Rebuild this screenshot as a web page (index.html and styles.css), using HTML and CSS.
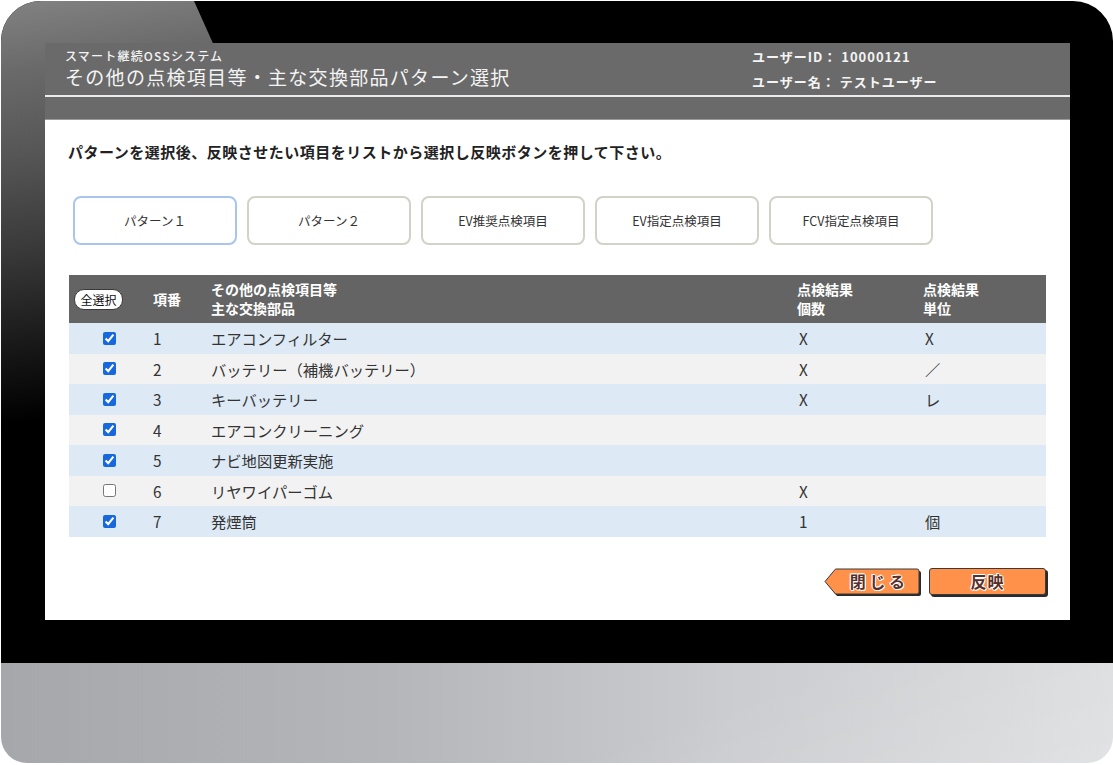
FILE: index.html
```html
<!DOCTYPE html>
<html lang="ja">
<head>
<meta charset="utf-8">
<title>その他の点検項目等・主な交換部品パターン選択</title>
<link rel="stylesheet" href="styles.css">
</head>
<body>
<div class="monitor">
  <div class="bezel">
    <div class="glare"></div>
    <div class="screen">
      <header class="app-header">
        <div class="titles">
          <div class="sys-name">スマート継続OSSシステム</div>
          <h1 class="page-title">その他の点検項目等・主な交換部品パターン選択</h1>
        </div>
        <div class="user-info">
          <div>ユーザーID： 10000121</div>
          <div>ユーザー名： テストユーザー</div>
        </div>
      </header>
      <div class="sub-band"></div>
      <main class="content">
        <p class="instruction">パターンを選択後、反映させたい項目をリストから選択し反映ボタンを押して下さい。</p>
        <div class="patterns">
          <button class="pattern active">パターン１</button>
          <button class="pattern">パターン２</button>
          <button class="pattern">EV推奨点検項目</button>
          <button class="pattern">EV指定点検項目</button>
          <button class="pattern">FCV指定点検項目</button>
        </div>
        <div class="tbl">
          <div class="row head">
            <div class="c-chk"><button class="select-all">全選択</button></div>
            <div class="c-no">項番</div>
            <div class="c-name">その他の点検項目等<br>主な交換部品</div>
            <div class="c-cnt">点検結果<br>個数</div>
            <div class="c-unit">点検結果<br>単位</div>
          </div>
          <div class="row odd">
            <div class="c-chk"><input type="checkbox" checked></div>
            <div class="c-no">1</div>
            <div class="c-name">エアコンフィルター</div>
            <div class="c-cnt">X</div>
            <div class="c-unit">X</div>
          </div>
          <div class="row even">
            <div class="c-chk"><input type="checkbox" checked></div>
            <div class="c-no">2</div>
            <div class="c-name">バッテリー（補機バッテリー）</div>
            <div class="c-cnt">X</div>
            <div class="c-unit">／</div>
          </div>
          <div class="row odd">
            <div class="c-chk"><input type="checkbox" checked></div>
            <div class="c-no">3</div>
            <div class="c-name">キーバッテリー</div>
            <div class="c-cnt">X</div>
            <div class="c-unit">レ</div>
          </div>
          <div class="row even">
            <div class="c-chk"><input type="checkbox" checked></div>
            <div class="c-no">4</div>
            <div class="c-name">エアコンクリーニング</div>
            <div class="c-cnt"></div>
            <div class="c-unit"></div>
          </div>
          <div class="row odd">
            <div class="c-chk"><input type="checkbox" checked></div>
            <div class="c-no">5</div>
            <div class="c-name">ナビ地図更新実施</div>
            <div class="c-cnt"></div>
            <div class="c-unit"></div>
          </div>
          <div class="row even">
            <div class="c-chk"><input type="checkbox"></div>
            <div class="c-no">6</div>
            <div class="c-name">リヤワイパーゴム</div>
            <div class="c-cnt">X</div>
            <div class="c-unit"></div>
          </div>
          <div class="row odd">
            <div class="c-chk"><input type="checkbox" checked></div>
            <div class="c-no">7</div>
            <div class="c-name">発煙筒</div>
            <div class="c-cnt">1</div>
            <div class="c-unit">個</div>
          </div>
        </div>
        <div class="actions">
          <button class="btn-close">
            <svg class="btn-shape" width="98" height="28" viewBox="0 0 98 28">
              <path d="M13,3 L95,3 Q97,3 97,5 L97,26 Q97,28 95,28 L13,28 L3,15.5 Z" fill="#2a2a2a"/>
              <path d="M11.5,1 L93,1 Q95,1 95,3 L95,24 Q95,26 93,26 L11.5,26 L1,13.5 Z" fill="#ff914a" stroke="#3a3a3a" stroke-width="1"/>
            </svg>
            <span class="btn-label">閉 じ る</span>
          </button>
          <button class="btn-apply">反映</button>
        </div>
      </main>
    </div>
  </div>
  <div class="chin"></div>
</div>
</body>
</html>
```
FILE: styles.css
```css
html, body {
  margin: 0;
  padding: 0;
  background: #ffffff;
}
body {
  font-family: "Noto Sans CJK JP", "Noto Sans", sans-serif;
  color: #333;
}
.monitor {
  width: 1112px;
  margin: 1px 0 0 1px;
}
.bezel {
  position: relative;
  overflow: hidden;
  background: #000;
  border-radius: 40px 40px 0 0;
  padding: 42px 42px 43px 44px;
}
.glare {
  position: absolute;
  left: 0;
  top: 0;
  width: 480px;
  height: 640px;
  background: linear-gradient(172deg, #828282 0%, #6a6a6a 10%, #565656 22%, #383838 36%, #161616 50%, #000 60%);
  clip-path: polygon(0 0, 193px 0, 480px 640px, 0 640px);
}
.screen {
  position: relative;
  width: 1025px;
  height: 577px;
  background: #fff;
  display: flex;
  flex-direction: column;
}
.app-header {
  background: #6a6a6a;
  height: 52px;
  display: flex;
  color: #f4f4f4;
  border-bottom: 2px solid #ececec;
}
.titles {
  flex: 1;
  padding: 4px 0 0 20px;
}
.sys-name {
  font-size: 12px;
  line-height: 18px;
  letter-spacing: 1.2px;
  font-weight: 500;
}
.page-title {
  margin: 0;
  font-size: 19px;
  line-height: 24px;
  font-weight: 400;
  letter-spacing: 1.3px;
}
.user-info {
  width: 318px;
  padding-top: 1px;
  font-size: 13px;
  line-height: 25px;
  font-weight: 700;
  letter-spacing: 1px;
}
.sub-band {
  height: 22px;
  background: #6a6a6a;
  border-bottom: 1px solid #9a9a9a;
}
.content {
  padding: 0 24px;
}
.instruction {
  margin: 22px 0 0 -1px;
  font-size: 15px;
  line-height: 20px;
  font-weight: 700;
  color: #222;
  letter-spacing: 0.5px;
}
.patterns {
  display: flex;
  gap: 10px;
  margin: 34px 0 0 4px;
}
.pattern {
  width: 164px;
  height: 49px;
  background: #fff;
  border: 2px solid #d2d2c8;
  border-radius: 8px;
  font-family: inherit;
  font-size: 12.5px;
  color: #333;
  padding: 0;
}
.pattern.active {
  border-color: #a9c5ee;
}
.tbl {
  margin-top: 30px;
  width: 977px;
}
.row {
  display: grid;
  grid-template-columns: 80px 58px 588px 126px 125px;
  align-items: center;
  height: 30.5px;
  font-size: 15.3px;
  color: #333;
}
.row > div {
  padding-left: 4px;
}
.row > .c-chk {
  padding-left: 0;
  display: flex;
  justify-content: center;
}
.row.head {
  height: 48px;
  background: #646464;
  color: #fff;
  font-weight: 700;
  font-size: 14px;
  line-height: 19px;
}
.row.head > .c-chk {
  justify-content: flex-start;
  padding-left: 5px;
}
.row.head > .c-cnt,
.row.head > .c-unit {
  padding-left: 2px;
}
.row.odd { background: #dde9f5; }
.row.even { background: #f2f2f2; }
.select-all {
  width: 49px;
  height: 21px;
  border-radius: 10px;
  background: #fff;
  border: 1px solid #3a3a3a;
  font-family: inherit;
  font-size: 12px;
  color: #111;
  padding: 0;
  line-height: 19px;
}
input[type="checkbox"] {
  width: 13px;
  height: 13px;
  margin: 0;
  accent-color: #1668dc;
}
.actions {
  display: flex;
  justify-content: flex-end;
  gap: 7px;
  margin-top: 31px;
}
.btn-close {
  position: relative;
  width: 98px;
  height: 28px;
  padding: 0;
  border: 0;
  background: transparent;
}
.btn-shape {
  position: absolute;
  left: 0;
  top: 0;
}
.btn-label,
.btn-apply {
  font-family: "Noto Sans CJK JP", sans-serif;
  font-weight: 700;
  font-size: 16px;
  color: #5a2f2a;
  text-shadow: 1px 0 0 #fff, -1px 0 0 #fff, 0 1px 0 #fff, 0 -1px 0 #fff, 1px 1px 0 #fff, -1px -1px 0 #fff;
}
.btn-label {
  position: absolute;
  left: 12px;
  right: 3px;
  top: 0;
  line-height: 26px;
  text-align: center;
}
.btn-apply {
  width: 117px;
  height: 27px;
  padding: 0;
  background: #ff914a;
  border: 1px solid #3a3a3a;
  border-radius: 3px;
  box-shadow: 2px 2px 0 #2a2a2a;
  line-height: 24px;
  letter-spacing: 1px;
}
.chin {
  height: 100px;
  border-radius: 0 0 26px 26px;
  background:
    linear-gradient(160deg, rgba(0,0,0,0) 60%, rgba(255,255,255,0.15) 100%),
    linear-gradient(90deg, #a6a7ab 0%, #b5b6ba 35%, #cbcccf 65%, #dcdddf 100%);
}
```
